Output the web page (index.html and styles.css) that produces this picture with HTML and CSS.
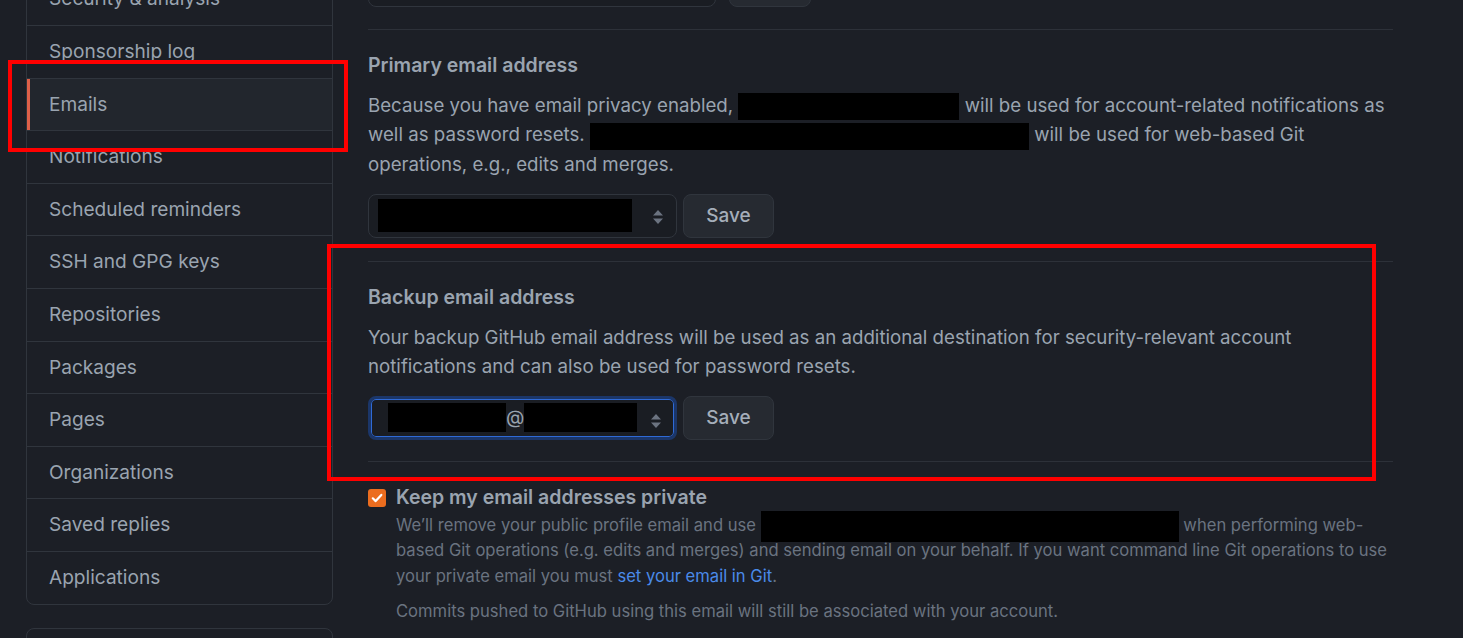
FILE: index.html
```html
<!DOCTYPE html>
<html lang="en">
<head>
<meta charset="utf-8">
<title>Emails</title>
<link rel="stylesheet" href="styles.css">
</head>
<body>
<div class="page">
  <aside class="sidebar">
    <nav class="menu">
      <a class="menu-item">Security &amp; analysis</a>
      <a class="menu-item">Sponsorship log</a>
      <a class="menu-item selected">Emails</a>
      <a class="menu-item">Notifications</a>
      <a class="menu-item">Scheduled reminders</a>
      <a class="menu-item">SSH and GPG keys</a>
      <a class="menu-item">Repositories</a>
      <a class="menu-item">Packages</a>
      <a class="menu-item">Pages</a>
      <a class="menu-item">Organizations</a>
      <a class="menu-item">Saved replies</a>
      <a class="menu-item">Applications</a>
    </nav>
    <nav class="menu menu-next"></nav>
  </aside>

  <main class="content">
    <div class="form-row">
      <div class="select select-wide"></div>
      <button class="btn btn-wide"></button>
    </div>

    <div class="divider"></div>

    <h2 class="heading">Primary email address</h2>
    <p class="text">Because you have email privacy enabled, <span class="redact r1"></span> will be used for account-related notifications as well as password resets. <span class="redact r2"></span> will be used for web-based Git operations, e.g., edits and merges.</p>
    <div class="form-row form-gap">
      <div class="select">
        <span class="redact r3"></span>
        <svg class="arrows" width="12" height="16" viewBox="0 0 12 16"><path d="M6 1 L11 6.5 H1 Z M1 9.5 H11 L6 15 Z" fill="#6b7380"/></svg>
      </div>
      <button class="btn">Save</button>
    </div>

    <div class="divider divider-b"></div>

    <h2 class="heading">Backup email address</h2>
    <p class="text text-b">Your backup GitHub email address will be used as an additional destination for security-relevant account notifications and can also be used for password resets.</p>
    <div class="form-row form-gap-b">
      <div class="select focused">
        <span class="redact r4"></span><span class="at">@</span><span class="redact r5"></span>
        <svg class="arrows" width="12" height="16" viewBox="0 0 12 16"><path d="M6 1 L11 6.5 H1 Z M1 9.5 H11 L6 15 Z" fill="#6b7380"/></svg>
      </div>
      <button class="btn">Save</button>
    </div>

    <div class="divider divider-c"></div>

    <div class="check-row">
      <span class="checkbox"><svg width="12" height="12" viewBox="0 0 12 12"><path d="M1.8 6.3 L4.7 9.1 L10.3 2.9" fill="none" stroke="#fff" stroke-width="2.2" stroke-linecap="round" stroke-linejoin="round"/></svg></span>
      <div class="check-body">
        <div class="check-label">Keep my email addresses private</div>
        <p class="note">We’ll remove your public profile email and use <span class="redact r6"></span> when performing web-based Git operations (e.g. edits and merges) and sending email on your behalf. If you want command line Git operations to use your private email you must <a class="link">set your email in Git</a>.</p>
        <p class="note note-2">Commits pushed to GitHub using this email will still be associated with your account.</p>
      </div>
    </div>
  </main>
</div>

<div class="annot annot-1"></div>
<div class="annot annot-2"></div>
</body>
</html>
```

FILE: styles.css
```css
html, body {
  margin: 0;
  padding: 0;
  background: #1c1f26;
  height: 100%;
  overflow: hidden;
}

body {
  font-family: Inter, "Noto Sans", "Liberation Sans", sans-serif;
  color: #9aa4b0;
  position: relative;
}

.page {
  display: flex;
  gap: 35px;
  padding-left: 26px;
  align-items: flex-start;
}

.sidebar {
  width: 307px;
  flex: none;
}

.menu {
  border: 1px solid #30353d;
  border-radius: 8px;
  margin-top: -27.6px;
  display: flex;
  flex-direction: column;
  overflow: hidden;
}

.menu-item {
  display: block;
  padding: 12px 22px;
  line-height: 27.6px;
  font-size: 19.1px;
  color: #9aa4b0;
  border-bottom: 1px solid #30353d;
}

.menu-item:last-child {
  border-bottom: none;
}

.menu-item.selected {
  background: #22262d;
  box-shadow: inset 3px 0 0 #df6049;
}

.menu-next {
  margin-top: 23px;
  height: 60px;
}

.content {
  width: 1025px;
  margin-top: -37px;
}

.form-row {
  display: flex;
  gap: 6px;
  align-items: stretch;
}

.form-row:first-child {
  gap: 13px;
}

.select {
  box-sizing: border-box;
  width: 309px;
  height: 44px;
  border: 1px solid #30353d;
  border-radius: 8px;
  background: #1a1d23;
  display: flex;
  align-items: center;
  padding-left: 9px;
  position: relative;
}

.select-wide {
  width: 348px;
}

.arrows {
  position: absolute;
  right: 12px;
  top: 14px;
}

.select.focused {
  border: 3px solid #1b3669;
  box-shadow: inset 0 0 0 1px #2f6ad6;
  padding-left: 17px;
}

.btn {
  box-sizing: border-box;
  width: 91px;
  height: 44px;
  border: 1px solid #30353d;
  border-radius: 8px;
  background: #262a31;
  color: #a5aeba;
  font-family: inherit;
  font-size: 19px;
  font-weight: 500;
  padding: 0;
}

.btn-wide {
  width: 82px;
}

.divider {
  border-top: 1px solid #2d3139;
  margin: 22px 0 21px;
}

.divider-b {
  margin-top: 23px;
}

.divider-c {
  margin-top: 21px;
  margin-bottom: 22px;
}

.heading {
  margin: 0;
  font-size: 19.5px;
  line-height: 28px;
  font-weight: 600;
  color: #9aa4b0;
}

.text {
  margin: 12px 0 0;
  font-size: 18.7px;
  line-height: 29px;
}

.text-b {
  margin-top: 12px;
}

.form-gap {
  margin-top: 15px;
}

.form-gap-b {
  margin-top: 15px;
}

.redact {
  display: inline-block;
  background: #000;
  vertical-align: middle;
}

.r1 { width: 221px; height: 27px; }
.r2 { width: 439px; height: 27px; }
.r3 { width: 254px; height: 33px; }
.r4 { width: 118px; height: 29px; }
.r5 { width: 113px; height: 29px; }
.r6 { width: 418px; height: 31px; margin: -4px 0; }

.at {
  font-size: 19px;
  color: #9aa4b0;
}

.check-row {
  display: flex;
  gap: 10px;
  align-items: flex-start;
}

.checkbox {
  flex: none;
  width: 18px;
  height: 18px;
  margin-top: 5px;
  border-radius: 3px;
  background: #ec6d1f;
  display: flex;
  align-items: center;
  justify-content: center;
}

.check-body {
  flex: 1;
}

.check-label {
  font-size: 19.5px;
  line-height: 27px;
  font-weight: 600;
  color: #9aa4b0;
}

.note {
  margin: 2px 0 0;
  font-size: 16.6px;
  line-height: 25.5px;
  color: #6a7380;
}

.note-2 {
  margin-top: 9.5px;
}

.link {
  color: #4a8ae8;
}

.annot {
  position: absolute;
  border: 4px solid #ff0000;
  box-sizing: border-box;
  pointer-events: none;
}

.annot-1 {
  left: 8px;
  top: 60px;
  width: 340px;
  height: 92px;
}

.annot-2 {
  left: 327px;
  top: 244px;
  width: 1049px;
  height: 237px;
}
```
